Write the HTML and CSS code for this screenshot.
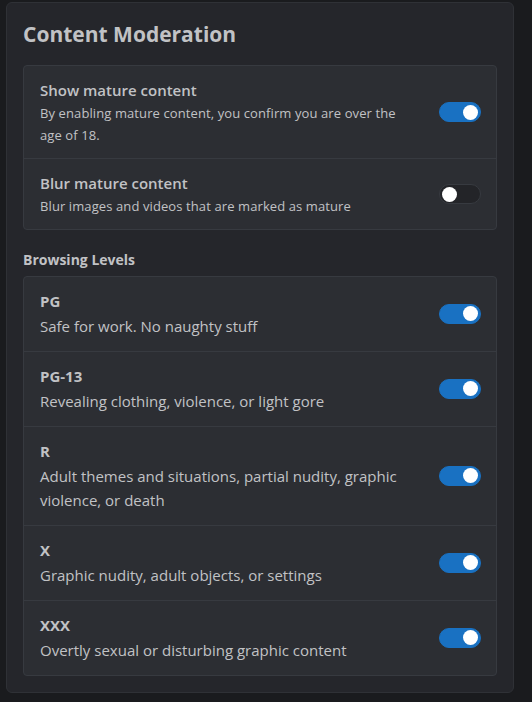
FILE: index.html
```html
<!DOCTYPE html>
<html lang="en">
<head>
<meta charset="utf-8">
<title>Content Moderation</title>
<link rel="stylesheet" href="styles.css">
</head>
<body>
<section class="card">
  <h2 class="card-title">Content Moderation</h2>
  <div class="group">
    <div class="row">
      <div class="text">
        <div class="row-title">Show mature content</div>
        <div class="row-desc">By enabling mature content, you confirm you are over the age of 18.</div>
      </div>
      <span class="toggle on"><span class="knob"></span></span>
    </div>
    <div class="row">
      <div class="text">
        <div class="row-title">Blur mature content</div>
        <div class="row-desc">Blur images and videos that are marked as mature</div>
      </div>
      <span class="toggle"><span class="knob"></span></span>
    </div>
  </div>

  <h3 class="section-title">Browsing Levels</h3>
  <div class="group levels">
    <div class="row">
      <div class="text">
        <div class="row-title">PG</div>
        <div class="row-desc">Safe for work. No naughty stuff</div>
      </div>
      <span class="toggle on"><span class="knob"></span></span>
    </div>
    <div class="row">
      <div class="text">
        <div class="row-title">PG-13</div>
        <div class="row-desc">Revealing clothing, violence, or light gore</div>
      </div>
      <span class="toggle on"><span class="knob"></span></span>
    </div>
    <div class="row">
      <div class="text">
        <div class="row-title">R</div>
        <div class="row-desc">Adult themes and situations, partial nudity, graphic violence, or death</div>
      </div>
      <span class="toggle on"><span class="knob"></span></span>
    </div>
    <div class="row">
      <div class="text">
        <div class="row-title">X</div>
        <div class="row-desc">Graphic nudity, adult objects, or settings</div>
      </div>
      <span class="toggle on"><span class="knob"></span></span>
    </div>
    <div class="row">
      <div class="text">
        <div class="row-title">XXX</div>
        <div class="row-desc">Overtly sexual or disturbing graphic content</div>
      </div>
      <span class="toggle on"><span class="knob"></span></span>
    </div>
  </div>
</section>
</body>
</html>
```

FILE: styles.css
```css
html, body {
  margin: 0;
  padding: 0;
  background: #1a1b1e;
}

body {
  padding: 2px 0 0 6px;
  font-family: "Open Sans", "Noto Sans", sans-serif;
  color: #c1c2c5;
}

.card {
  box-sizing: border-box;
  width: 508px;
  background: #25262b;
  border: 1px solid #2f3136;
  border-radius: 6px;
  padding: 16px;
}

.card-title {
  margin: 0 0 16px 0;
  font-size: 21px;
  line-height: 30px;
  font-weight: 700;
  color: #c1c2c5;
}

.section-title {
  margin: 19px 0 5px 0;
  font-size: 14px;
  line-height: 22px;
  font-weight: 700;
  color: #c1c2c5;
}

.group {
  background: #2c2e33;
  border: 1px solid #373a40;
  border-radius: 4px;
}

.row {
  display: flex;
  align-items: center;
  justify-content: space-between;
  gap: 16px;
  padding: 12px 15px 12px 16px;
}

.row + .row {
  border-top: 1px solid #373a40;
}

.text {
  flex: 1;
  min-width: 0;
  max-width: 370px;
}

.row-title {
  font-size: 15px;
  line-height: 24px;
  font-weight: 600;
}

.row-desc {
  font-size: 13px;
  line-height: 22px;
  letter-spacing: 0.1px;
}

.levels .row-title {
  font-size: 15px;
  line-height: 25px;
  font-weight: 700;
}

.levels .row-desc {
  font-size: 15px;
  line-height: 24.75px;
  letter-spacing: 0;
}

.toggle {
  box-sizing: border-box;
  flex: none;
  display: flex;
  align-items: center;
  width: 42px;
  height: 20px;
  padding: 0 2px;
  border-radius: 10px;
  border: 1px solid #373a40;
  background: #232428;
}

.toggle.on {
  justify-content: flex-end;
  background: #1971c2;
  border-color: #1971c2;
}

.knob {
  width: 15px;
  height: 15px;
  border-radius: 50%;
  background: #ffffff;
}
```
